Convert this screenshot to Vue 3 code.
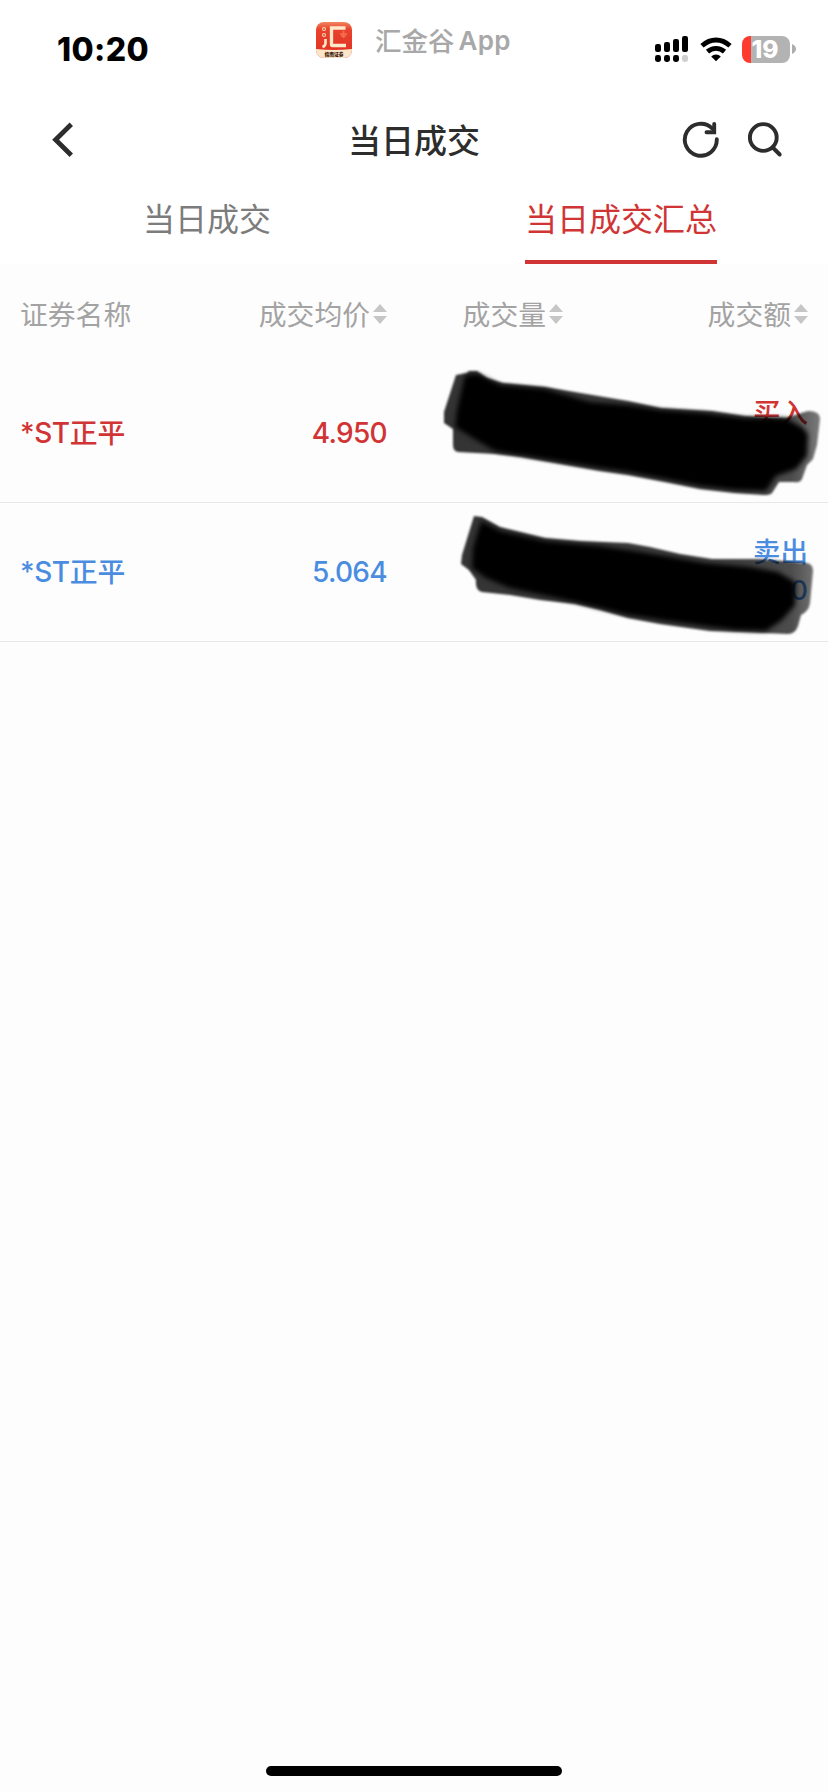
<script setup>
const columns = [
  { label: '证券名称', sortable: false },
  { label: '成交均价', sortable: true },
  { label: '成交量', sortable: true },
  { label: '成交额', sortable: true },
]
const rows = [
  { name: '*ST', cn: '正平', price: '4.950', side: '买入', amount: '', kind: 'buy' },
  { name: '*ST', cn: '正平', price: '5.064', side: '卖出', amount: '0', kind: 'sell' },
]
</script>

<template>
  <div class="screen">
    <header class="status">
      <div class="time">10:20</div>
      <div class="brand">
        <svg class="logo" width="36" height="36" viewBox="0 0 36 36">
          <defs>
            <linearGradient id="lg" x1="0" y1="0" x2="0" y2="1">
              <stop offset="0" stop-color="#f0865f" />
              <stop offset="0.2" stop-color="#e9432f" />
              <stop offset="1" stop-color="#df2f23" />
            </linearGradient>
            <clipPath id="lc"><rect width="36" height="36" rx="8" /></clipPath>
          </defs>
          <g clip-path="url(#lc)">
            <rect width="36" height="36" fill="url(#lg)" />
            <path d="M0 27Q18 29 36 27V36H0Z" fill="#fbe6c9" />
            <path d="M29.500 6H15.500V22.500Q15.500 23.500 16.500 23.500H30" fill="none" stroke="#ffe9c9" stroke-width="3.300" />
            <circle cx="8" cy="7" r="1.500" fill="none" stroke="#ffd9ae" stroke-width="1.100" />
            <circle cx="8" cy="13" r="1.500" fill="none" stroke="#ffd9ae" stroke-width="1.100" />
            <path d="M9.500 17v4q0 3-3 4" fill="none" stroke="#ffe9c9" stroke-width="2.600" />
            <path d="M24 12h7M27.500 9v7M25 14h5" stroke="#f5714e" stroke-width="1.600" />
            <text x="18" y="33.800" text-anchor="middle" class="logo-text">指南证券</text>
          </g>
        </svg>
        <span class="brand-cn">汇金谷</span><span class="brand-en">App</span>
      </div>
      <div class="indicators">
        <svg width="34" height="28" viewBox="0 0 34 28">
          <rect x="0" y="9" width="6" height="8" rx="2.200" />
          <rect x="9" y="7" width="6" height="10" rx="2.200" />
          <rect x="18" y="4" width="6" height="13" rx="2.200" />
          <rect x="27" y="1" width="6" height="16" rx="2.200" />
          <rect x="0" y="20" width="6" height="7" rx="2.400" />
          <rect x="9" y="20" width="6" height="7" rx="2.400" />
          <rect x="18" y="20" width="6" height="7" rx="2.400" />
          <rect x="27" y="20" width="6" height="7" rx="2.400" fill="#cfcfcf" />
        </svg>
        <svg class="wifi" width="32" height="26" viewBox="0 0 32 26" fill="none" stroke="#000" stroke-width="4.800">
          <path d="M2 8.800Q8.500 3 16 3T30 8.800" />
          <path d="M7.500 14.600Q11.200 11.300 16 11.300T24.500 14.600" />
          <path d="M11.200 19.500Q13.300 17.500 16 17.500T20.800 19.500L16 24.200Z" fill="#000" stroke="none" />
        </svg>
        <div class="battery"><span>19</span></div>
        <svg width="4" height="10" viewBox="0 0 4 10"><path d="M0 0Q4 2 4 5T0 10Z" fill="#adadad" /></svg>
      </div>
    </header>

    <nav class="nav">
      <svg width="24" height="38" viewBox="0 0 24 38" fill="none" stroke="#2d2d2d" stroke-width="4.800">
        <path d="M21.300 3.200L5.600 18.700L21.300 34.200" />
      </svg>
      <h1>当日成交</h1>
      <div class="actions">
        <svg width="38" height="38" viewBox="0 0 38 38" fill="none" stroke="#2d2d2d" stroke-width="3.900" stroke-linecap="round">
          <path d="M34.800 18.200A16 16 0 1 1 30.200 7.500" />
          <path d="M32.200 3V11.200H24.500" stroke-linejoin="miter" />
        </svg>
        <svg width="36" height="38" viewBox="0 0 36 38" fill="none" stroke="#2d2d2d" stroke-width="3.900" stroke-linecap="round">
          <circle cx="16.300" cy="16.500" r="13.400" />
          <path d="M25.700 26.500L32.700 33.500" />
        </svg>
      </div>
    </nav>

    <div class="tabs">
      <div class="tab"><span>当日成交</span></div>
      <div class="tab active"><span>当日成交汇总</span></div>
    </div>

    <main>
      <div class="grid head">
        <div v-for="c in columns" :key="c.label" class="cell">
          <span>{{ c.label }}</span>
          <svg v-if="c.sortable" width="14" height="20" viewBox="0 0 14 20" fill="#c6c6c6">
            <path d="M0 8L7 0L14 8ZM0 12H14L7 20Z" />
          </svg>
        </div>
      </div>
      <div v-for="r in rows" :key="r.kind" class="grid row" :class="r.kind">
        <div class="cell name"><span class="latin">{{ r.name }}</span><span class="cn">{{ r.cn }}</span></div>
        <div class="cell price">{{ r.price }}</div>
        <div class="cell"></div>
        <div class="amount"><div>{{ r.side }}</div><div class="figure">{{ r.amount }}</div></div>
      </div>
    </main>

    <!-- hand-drawn redaction strokes over the amounts -->
    <svg class="marker" width="428" height="300" viewBox="400 350 428 300">
      <defs>
        <linearGradient id="edge" gradientUnits="userSpaceOnUse" x1="440" y1="0" x2="822" y2="0">
          <stop offset="0" stop-opacity=".8" />
          <stop offset=".8" stop-opacity=".75" />
          <stop offset=".92" stop-opacity=".7" />
          <stop offset="1" stop-opacity=".5" />
        </linearGradient>
      </defs>
      <g class="soft" fill="url(#edge)">
        <path d="M456 375L467 373L469 371L477 371L487 378L503 383L545 387L628 401L661 408L712 411L745 416L785 418L798 414L808 411Q820 411 820 419L817 445L813 459L807 465L802 479Q800 483 794 482L779 482L772 493Q770 495 764 495L735 493L700 489L665 482L628 475L600 471L560 464L520 457L495 454L458 452Q453 451 453 445L453 429L444 423L444 412Z" />
        <path d="M474 516L482 517L500 527L545 538L580 541L628 543L650 547L680 554L712 559L760 559L795 562L807 563Q813 564 813 571L810 603Q809 611 801 615L798 626Q795 634 788 634L740 632L710 631L660 624L628 618L600 610L575 604L540 600L510 595L482 592Q475 590 476 580L469 570L461 564L462 555Z" />
      </g>
      <g class="core">
        <path d="M465 375L478 374L500 385L545 389L590 402L628 405L661 410L705 413L745 418L785 418L802 427L808 434L807 456L796 469L776 476L766 491L735 490L700 486L665 479L628 472L600 468L520 455L495 451L478 441L455 427L457 410Z" />
        <path d="M481 521L500 531L545 541L600 546L635 551L665 556L705 563L750 567L778 572L795 582L795 605L782 620L766 631L735 630L710 627L660 620L628 615L575 602L510 588L486 578L472 568L473 548Z" />
      </g>
    </svg>

    <div class="home"></div>
  </div>
</template>

<style>
body { margin: 0; background: #fdfdfd; }
</style>

<style scoped>
.screen {
  position: relative;
  display: flex;
  flex-direction: column;
  width: 828px;
  height: 1792px;
  overflow: hidden;
  background: #fdfdfd;
  font-family: "Noto Sans CJK SC", sans-serif;
}
svg { display: block; flex: none; }
.status {
  display: grid;
  grid-template-columns: 316px 1fr 174px;
  height: 100px;
  background: #fff;
  box-sizing: border-box;
}
.time {
  padding: 30px 0 0 57px;
  font: 800 32px/40px Inter, sans-serif;
  letter-spacing: 0.4px;
}
.brand { display: flex; padding-top: 22px; color: #a8a8a8; }
.brand-cn { margin-left: 23px; font-size: 26.500px; font-weight: 500; line-height: 35px; }
.brand-en { margin-left: 4px; font: 600 26px/38px Inter, sans-serif; letter-spacing: 0.3px; }
.logo-text { font-size: 4.800px; font-weight: 900; fill: #3d1a0e; }
.indicators { display: flex; align-items: center; height: 28px; padding: 35px 0 0 1px; }
.wifi { margin: 1px 10px 0 11px; }
.battery {
  width: 48px;
  height: 27px;
  border-radius: 8px;
  background: linear-gradient(90deg, #ff3b30 9px, #b3b3b3 9px);
  color: #fff;
  font: 800 24.500px/27px Inter, sans-serif;
  text-align: center;
  margin-right: 2px;
}
.battery span { margin-left: -2px; }
.nav {
  display: grid;
  grid-template-columns: 200px 1fr 200px;
  align-items: center;
  height: 80px;
  padding: 0 0 0 50px;
  background: #fff;
}
.nav h1 {
  margin: -3px 0 0 -50px;
  color: #2d2d2d;
  font-size: 33px;
  font-weight: 500;
  line-height: 40px;
  text-align: center;
}
.actions { display: flex; gap: 27px; padding-left: 54px; }
.tabs { display: flex; height: 84px; background: #fff; }
.tab { flex: 1; text-align: center; color: #7c7c7c; font-size: 32px; line-height: 75px; }
.tab span { display: inline-block; box-sizing: border-box; height: 84px; }
.tab.active { color: #d13434; }
.tab.active span { border-bottom: 4px solid #d13434; }
.grid {
  display: grid;
  grid-template-columns: 187px 180px 176px 245px;
  padding: 0 20px;
  align-items: center;
}
.head { height: 100px; color: #a3a3a3; font-size: 27.800px; }
.head span { margin-top: -3px; }
.cell { display: flex; align-items: center; justify-content: flex-end; gap: 3px; }
.cell:first-child { justify-content: flex-start; gap: 0; }
.row { height: 139px; box-sizing: border-box; border-bottom: 1px solid #e8e8e8; font-size: 28px; }
.buy { color: #d13434; }
.sell { color: #4a8de0; }
.latin, .price, .figure { font-family: Inter, sans-serif; font-weight: 450; }
.cn { margin-top: -4px; font-size: 27.800px; font-weight: 500; }
.latin { letter-spacing: -0.4px; }
.price { letter-spacing: -0.7px; }
.amount {
  height: 80px;
  margin: -4px 0 0;
  font-size: 27.500px;
  font-weight: 500;
  line-height: 40px;
  text-align: right;
}
.amount div { height: 40px; }
.marker { position: absolute; left: 400px; top: 350px; }
.soft { filter: blur(1.300px); }
.core { filter: blur(2.600px); }
.home {
  width: 296px;
  height: 10px;
  margin: auto auto 16px;
  border-radius: 5px;
  background: #000;
}
</style>
